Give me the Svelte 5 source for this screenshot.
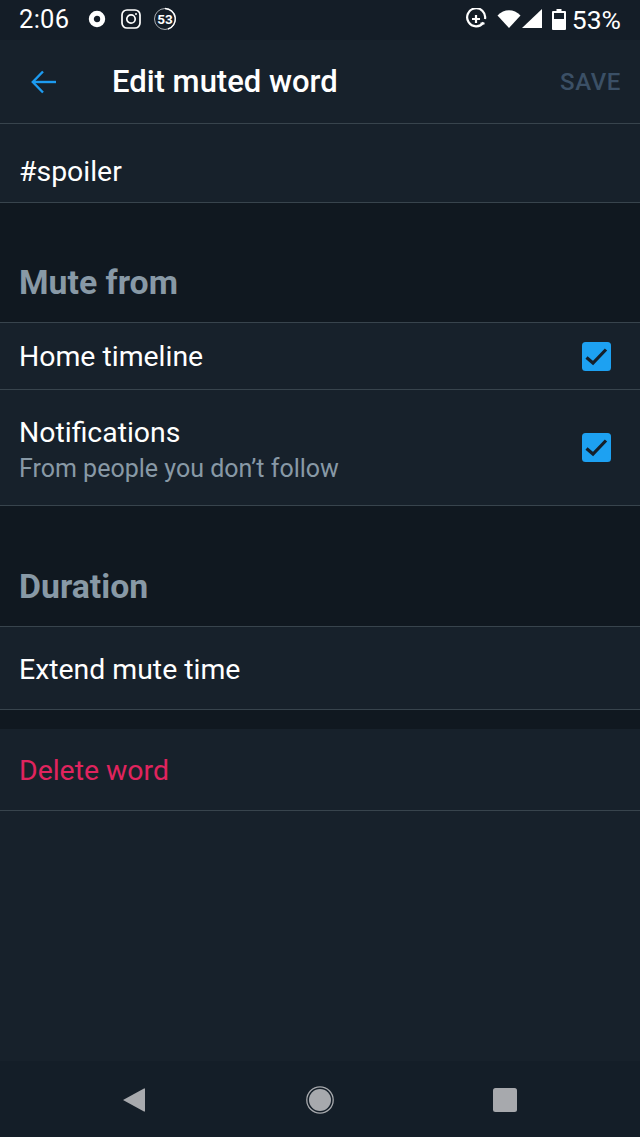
<div class="screen">
  <div class="status">
    <span class="time">2:06</span>
    <svg class="ic dot" width="18" height="18" viewBox="0 0 18 18"><circle cx="9" cy="9" r="5.700" fill="none" stroke="#fff" stroke-width="5"/></svg>
    <svg class="ic insta" width="20" height="20" viewBox="0 0 20 20" fill="none" stroke="#fff"><rect x="1" y="1" width="18" height="18" rx="5" stroke-width="1.700"/><circle cx="10" cy="10" r="4.200" stroke-width="1.700"/><circle cx="15" cy="5" r="1" fill="#fff" stroke="none"/></svg>
    <span class="ring">
      <svg width="24" height="24" viewBox="0 0 24 24" fill="none"><circle cx="12" cy="12" r="10.500" stroke="#a9adb2" stroke-width="1"/><path d="M12 1.500A10.500 10.500 0 0 1 15 22" stroke="#fff" stroke-width="1.400"/></svg>
      <span class="ringnum">53</span>
    </span>
    <span class="spacer"></span>
    <svg class="ic" width="22" height="22" viewBox="0 0 22 22" fill="none" stroke="#fff"><path d="M18.500 14.500A9 9 0 1 1 20 11" stroke-width="2.200"/><path d="M11 7v8M7 11h8" stroke-width="2.200"/><path d="M15.500 15.500h4" stroke-width="2"/></svg>
    <svg class="ic wifi" width="24" height="20" viewBox="0 0 24 20"><path d="M0.500 6.500C7 -0.500 17 -0.500 23.500 6.500L12 19Z" fill="#fff"/></svg>
    <svg class="ic signal" width="20" height="20" viewBox="0 0 20 20"><path d="M20 0V19H0Z" fill="#fff"/></svg>
    <svg class="ic batt" width="14" height="21" viewBox="0 0 14 21"><path d="M4.500 0h5v2H13a1 1 0 0 1 1 1v17a1 1 0 0 1-1 1H1a1 1 0 0 1-1-1V3a1 1 0 0 1 1-1h3.500z" fill="#fff"/><rect x="2" y="4" width="10" height="6" fill="#17212b"/></svg>
    <span class="pct">53%</span>
  </div>

  <header class="bar">
    <svg class="back" width="26" height="24" viewBox="0 0 26 24" fill="none" stroke="#1d9bf0" stroke-width="2.400"><path d="M25 12H2"/><path d="M12 1.500 1.800 12 12 22.500"/></svg>
    <h1>Edit muted word</h1>
    <span class="save">SAVE</span>
  </header>

  <div class="row word">#spoiler</div>

  <h2 class="sect first">Mute from</h2>
  <div class="row home">
    <span>Home timeline</span>
    {@render box()}
  </div>
  <div class="row notif">
    <div class="stack"><span>Notifications</span><small>From people you don’t follow</small></div>
    {@render box()}
  </div>

  <h2 class="sect second">Duration</h2>
  <div class="row extend">Extend mute time</div>
  <div class="gap"></div>
  <div class="row del">Delete word</div>

  <div class="grow"></div>

  <nav class="nav">
    <svg width="24" height="26" viewBox="0 0 24 26"><path d="M1 13 22 1.500a.6.6 0 0 1 1 .5V24a.6.6 0 0 1-1 .5Z" fill="#a7a9ad"/></svg>
    <svg width="28" height="28" viewBox="0 0 28 28"><circle cx="14" cy="14" r="13.200" fill="none" stroke="#a7a9ad" stroke-width="1.300"/><circle cx="14" cy="14" r="11" fill="#a7a9ad"/></svg>
    <svg width="24" height="24" viewBox="0 0 24 24"><rect width="24" height="24" rx="2.500" fill="#a7a9ad"/></svg>
  </nav>
</div>

{#snippet box()}
  <svg class="box" width="29" height="29" viewBox="0 0 29 29"><rect width="29" height="29" rx="3.500" fill="#1da1f2"/><path d="M4.500 15.500 11 21 24 7.500" fill="none" stroke="#15202b" stroke-width="3.200"/></svg>
{/snippet}

<style>
  :global(body) { margin: 0; background: #17212b; }
  .screen {
    width: 640px; height: 1137px; display: flex; flex-direction: column;
    background: #17212b; color: #fff; overflow: hidden;
    font-family: Roboto, "Noto Sans", sans-serif;
  }
  .status {
    height: 40px; flex: none; box-sizing: border-box; padding: 0 19px 2px;
    display: flex; align-items: center; background: #141d27;
  }
  .ic { flex: none; }
  .dot { margin-left: 19px; }
  .insta { margin-left: 15px; }
  .wifi { margin-left: 10px; }
  .signal { margin-left: 1px; }
  .batt { margin-left: 10px; }
  .time { font-size: 25.500px; width: 50px; letter-spacing: .3px; }
  .ring { position: relative; width: 24px; height: 24px; margin-left: 12px; display: block; }
  .ring svg { display: block; }
  .ringnum { position: absolute; inset: 0; text-align: center; font-size: 13.500px; font-weight: 700; line-height: 24px; }
  .spacer { flex: 1; }
  .pct { font-size: 26.500px; margin-left: 6px; }
  .bar {
    height: 84px; flex: none; display: flex; align-items: center; box-sizing: border-box;
    border-bottom: 1px solid #38444d; padding: 0 19px 0 31px;
  }
  .back { flex: none; margin-right: 55px; }
  h1 { margin: 0; font-size: 31px; font-weight: 500; flex: 1; }
  .save { font-size: 24px; font-weight: 500; color: #3b5066; letter-spacing: .6px; }
  .row {
    flex: none; display: flex; align-items: center; justify-content: space-between;
    padding: 0 29px 0 19px; box-sizing: border-box; font-size: 28.400px;
    border-bottom: 1px solid #38444d; background: #17212b;
  }
  .word { height: 79px; padding-top: 17px; }
  .sect {
    margin: 0; background: #101820; color: #8899a6; font-size: 33.800px; font-weight: 700;
    padding-left: 19px; box-sizing: border-box; flex: none;
    display: flex; align-items: flex-end;
    border-bottom: 1px solid #38444d;
  }
  .first { height: 120px; padding-bottom: 20px; }
  .second { height: 121px; padding-bottom: 20px; }
  .home { height: 67px; }
  .notif { height: 116px; }
  .stack { display: flex; flex-direction: column; padding-top: 8px; }
  .stack span { line-height: 34px; }
  small { font-size: 25px; color: #8899a6; line-height: 38px; }
  .extend { height: 83px; padding-top: 2px; }
  .gap { height: 19px; flex: none; background: #101820; }
  .del { height: 82px; color: #e0245e; padding-top: 2px; }
  .grow { flex: 1; }
  .nav {
    height: 76px; flex: none; background: #141e28; display: flex; align-items: center;
    justify-content: space-between; padding: 2px 123px 0 122px; box-sizing: border-box;
  }
</style>
